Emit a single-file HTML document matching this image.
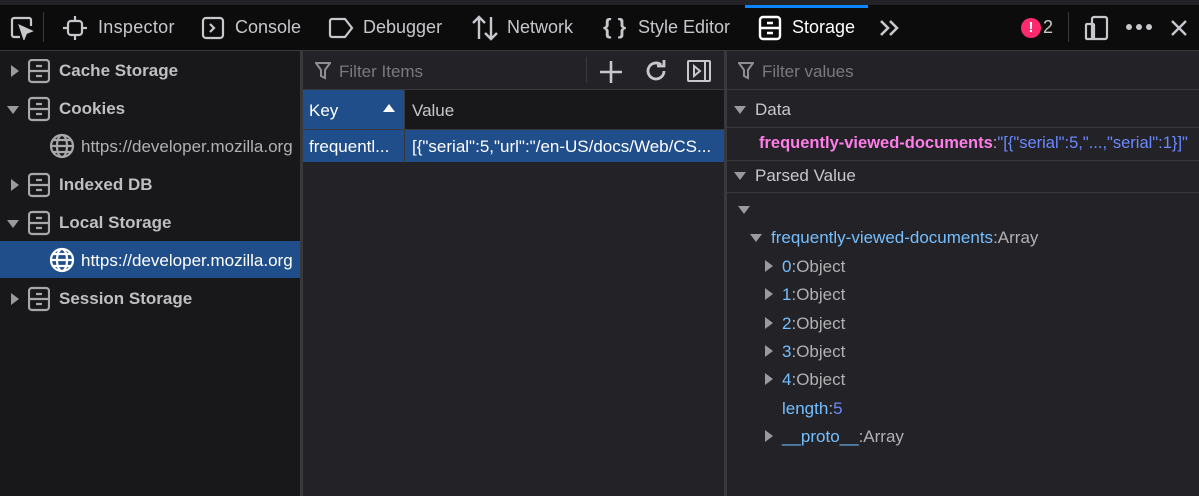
<!DOCTYPE html>
<html><head><style>
*{margin:0;padding:0;box-sizing:border-box}
body{width:1199px;height:496px;background:#232327;font-family:"Liberation Sans",sans-serif;color:#e0e0e2;position:relative;overflow:hidden;font-size:17px}
.a{position:absolute;white-space:nowrap}
svg{position:absolute}
.tb{color:#c8c8cc;font-size:18px}
.bold{font-weight:bold;color:#bfbfc3}
.tri{position:absolute;width:0;height:0}
.tr{border-top:6px solid transparent;border-bottom:6px solid transparent;border-left:8px solid #9a9a9e}
.td{border-left:6px solid transparent;border-right:6px solid transparent;border-top:8px solid #9a9a9e}
.blue{color:#75bfff}
.g{color:#b1b1b3}
</style></head><body>
<div class="a" style="left:0;top:0;width:1199px;height:5px;background:#232327"></div>
<div class="a" style="left:0;top:5px;width:1199px;height:45px;background:#0c0c0d"></div>
<div class="a" style="left:745px;top:5px;width:123px;height:3px;background:#0a84ff"></div>
<div class="a" style="left:0;top:50px;width:1199px;height:1px;background:#38383d"></div>
<svg style="left:10px;top:16px" width="24" height="24" viewBox="0 0 24 24" fill="none" stroke="#c8c8cc" stroke-width="2.2"><path d="M10 21H4a2 2 0 0 1-2-2V4a2 2 0 0 1 2-2h15a2 2 0 0 1 2 2v6"/><path d="M10 10l4 12 2-5 5-2z" fill="#c8c8cc"/></svg>
<div class="a" style="left:43px;top:12px;width:1px;height:30px;background:#3a3a3e"></div>
<svg style="left:63px;top:15px" width="24" height="26" viewBox="0 0 24 26" fill="none" stroke="#c8c8cc" stroke-width="2.2"><rect x="5" y="6" width="14" height="14" rx="3"/><path d="M12 1v5M12 20v5M0 13h5M19 13h5"/></svg>
<div class="a tb" style="left:98px;top:17px;letter-spacing:0.3px">Inspector</div>
<svg style="left:201px;top:16px" width="24" height="24" viewBox="0 0 24 24" fill="none" stroke="#c8c8cc" stroke-width="2.2"><rect x="2" y="2" width="20" height="20" rx="3"/><path d="M9 8l4 4-4 4"/></svg>
<div class="a tb" style="left:235px;top:17px">Console</div>
<svg style="left:328px;top:17px" width="26" height="22" viewBox="0 0 26 22" fill="none" stroke="#c8c8cc" stroke-width="2.2"><path d="M2 4a2 2 0 0 1 2-2h13l7 9-7 9H4a2 2 0 0 1-2-2z"/></svg>
<div class="a tb" style="left:363px;top:17px">Debugger</div>
<svg style="left:472px;top:15px" width="26" height="26" viewBox="0 0 26 26" fill="none" stroke="#c8c8cc" stroke-width="2.4"><path d="M7 24V2M1 8l6-6 6 6M19 2v22M13 18l6 6 6-6"/></svg>
<div class="a tb" style="left:507px;top:17px">Network</div>
<div class="a tb" style="left:603px;top:14px;font-size:22px;font-weight:bold">{ }</div>
<div class="a tb" style="left:638px;top:17px">Style Editor</div>
<svg style="left:758px;top:15px" width="24" height="26" viewBox="0 0 24 26" fill="none" stroke="#fff" stroke-width="2.4"><rect x="2" y="2" width="20" height="22" rx="3"/><path d="M2 13h20M9 8h6M9 18h6"/></svg>
<div class="a tb" style="left:792px;top:17px;color:#fff">Storage</div>
<svg style="left:879px;top:19px" width="22" height="18" viewBox="0 0 22 18" fill="none" stroke="#c8c8cc" stroke-width="2.6"><path d="M2 2l7 7-7 7M11 2l7 7-7 7"/></svg>
<div class="a" style="left:1021px;top:18px;width:20px;height:20px;border-radius:50%;background:#ff2a6d;color:#fff;font-weight:bold;font-size:15px;text-align:center;line-height:20px">!</div>
<div class="a tb" style="left:1043px;top:17px">2</div>
<div class="a" style="left:1068px;top:12px;width:1px;height:30px;background:#3a3a3e"></div>
<svg style="left:1084px;top:15px" width="26" height="26" viewBox="0 0 26 26" fill="none" stroke="#c8c8cc" stroke-width="2.2"><rect x="8" y="2" width="15" height="22" rx="2"/><rect x="2" y="9" width="8" height="15" rx="1"/></svg>
<svg style="left:1125px;top:22px" width="28" height="10" viewBox="0 0 28 10" fill="#c8c8cc"><circle cx="4" cy="5" r="3"/><circle cx="14" cy="5" r="3"/><circle cx="24" cy="5" r="3"/></svg>
<svg style="left:1170px;top:19px" width="18" height="18" viewBox="0 0 18 18" stroke="#c8c8cc" stroke-width="2.4"><path d="M2 2l14 14M16 2L2 16"/></svg>

<div class="a" style="left:0;top:51px;width:300px;height:445px;background:#18181a"></div>
<div class="a" style="left:300px;top:51px;width:3px;height:445px;background:#38383d"></div>
<div class="a" style="left:0;top:241px;width:300px;height:37px;background:#204e8a"></div>
<div class="tri tr" style="left:11px;top:65px"></div>
<div class="tri td" style="left:7px;top:106px"></div>
<div class="tri tr" style="left:11px;top:179px"></div>
<div class="tri td" style="left:7px;top:220px"></div>
<div class="tri tr" style="left:11px;top:293px"></div>
<svg style="left:28px;top:59px" width="22" height="260" viewBox="0 0 22 260" fill="none" stroke="#a8a8ac" stroke-width="2.2">
<g><rect x="1" y="1" width="20" height="22" rx="3"/><path d="M1 12h20M8 7h6M8 17h6"/></g>
<g transform="translate(0,38)"><rect x="1" y="1" width="20" height="22" rx="3"/><path d="M1 12h20M8 7h6M8 17h6"/></g>
<g transform="translate(0,114)"><rect x="1" y="1" width="20" height="22" rx="3"/><path d="M1 12h20M8 7h6M8 17h6"/></g>
<g transform="translate(0,152)"><rect x="1" y="1" width="20" height="22" rx="3"/><path d="M1 12h20M8 7h6M8 17h6"/></g>
<g transform="translate(0,228)"><rect x="1" y="1" width="20" height="22" rx="3"/><path d="M1 12h20M8 7h6M8 17h6"/></g>
</svg>
<div class="a bold" style="left:59px;top:61px">Cache Storage</div>
<div class="a bold" style="left:59px;top:99px">Cookies</div>
<div class="a bold" style="left:59px;top:175px">Indexed DB</div>
<div class="a bold" style="left:59px;top:213px">Local Storage</div>
<div class="a bold" style="left:59px;top:289px">Session Storage</div>
<svg style="left:49px;top:133px" width="26" height="26" viewBox="0 0 26 26" fill="none" stroke="#a8a8ac" stroke-width="2.2"><circle cx="13" cy="13" r="11"/><ellipse cx="13" cy="13" rx="5" ry="11"/><path d="M2 13h22M4 7h18M4 19h18"/></svg>
<svg style="left:49px;top:247px" width="26" height="26" viewBox="0 0 26 26" fill="none" stroke="#fff" stroke-width="2.2"><circle cx="13" cy="13" r="11"/><ellipse cx="13" cy="13" rx="5" ry="11"/><path d="M2 13h22M4 7h18M4 19h18"/></svg>
<div class="a" style="left:81px;top:137px;color:#b1b1b3">https://developer.mozilla.org</div>
<div class="a" style="left:81px;top:251px;color:#fff">https://developer.mozilla.org</div>

<div class="a" style="left:303px;top:51px;width:421px;height:445px;background:#232327"></div>
<div class="a" style="left:303px;top:89px;width:421px;height:1px;background:#38383d"></div>
<svg style="left:315px;top:62px" width="16" height="18" viewBox="0 0 16 18" fill="none" stroke="#8f8f93" stroke-width="2"><path d="M1 1h14L10 8v8l-4-2V8z"/></svg>
<div class="a" style="left:339px;top:62px;color:#7a7a7e">Filter Items</div>
<div class="a" style="left:586px;top:57px;width:1px;height:26px;background:#3a3a3e"></div>
<svg style="left:599px;top:60px" width="24" height="24" viewBox="0 0 24 24" stroke="#c8c8cc" stroke-width="2.6"><path d="M12 1v22M1 12h22"/></svg>
<svg style="left:644px;top:59px" width="24" height="24" viewBox="0 0 24 24" fill="none" stroke="#c8c8cc" stroke-width="2.8"><path d="M20 12a8 8 0 1 1-3-6.3"/><path d="M13 5h7V-1" transform="translate(0,2)"/></svg>
<svg style="left:687px;top:60px" width="24" height="22" viewBox="0 0 24 22" fill="none" stroke="#c8c8cc" stroke-width="2"><rect x="1" y="1" width="22" height="20" rx="1"/><path d="M18 1v20M7 6l6 5-6 5z"/></svg>
<div class="a" style="left:303px;top:90px;width:101px;height:39px;background:#204e8a"></div>
<div class="a" style="left:405px;top:90px;width:319px;height:39px;background:#18181a"></div>
<div class="a" style="left:404px;top:90px;width:1px;height:72px;background:#38383d"></div>
<div class="a" style="left:309px;top:101px;color:#fff">Key</div>
<div class="tri" style="left:383px;top:104px;border-left:6px solid transparent;border-right:6px solid transparent;border-bottom:8px solid #fff"></div>
<div class="a" style="left:412px;top:101px;color:#c8c8cc">Value</div>
<div class="a" style="left:303px;top:129px;width:421px;height:1px;background:#38383d"></div>
<div class="a" style="left:303px;top:130px;width:101px;height:32px;background:#204e8a"></div>
<div class="a" style="left:405px;top:130px;width:319px;height:32px;background:#204e8a"></div>
<div class="a" style="left:309px;top:137px;color:#fff">frequentl...</div>
<div class="a" style="left:412px;top:137px;color:#fff">[{"serial":5,"url":"/en-US/docs/Web/CS...</div>

<div class="a" style="left:724px;top:51px;width:3px;height:445px;background:#38383d"></div>
<div class="a" style="left:727px;top:89px;width:472px;height:1px;background:#38383d"></div>
<svg style="left:738px;top:62px" width="16" height="18" viewBox="0 0 16 18" fill="none" stroke="#8f8f93" stroke-width="2"><path d="M1 1h14L10 8v8l-4-2V8z"/></svg>
<div class="a" style="left:762px;top:62px;color:#7a7a7e">Filter values</div>
<div class="tri td" style="left:734px;top:106px"></div>
<div class="a" style="left:755px;top:100px;color:#c8c8cc">Data</div>
<div class="a" style="left:727px;top:127px;width:472px;height:1px;background:#38383d"></div>
<div class="a" style="left:759px;top:134px;font-size:16.5px"><b style="color:#ff7de9">frequently-viewed-documents</b><span class="g">:</span><span style="color:#6b89ff">"[{"serial":5,"...,"serial":1}]"</span></div>
<div class="a" style="left:727px;top:160px;width:472px;height:1px;background:#38383d"></div>
<div class="tri td" style="left:734px;top:172px"></div>
<div class="a" style="left:755px;top:166px;color:#c8c8cc">Parsed Value</div>
<div class="a" style="left:727px;top:192px;width:472px;height:1px;background:#38383d"></div>
<div class="tri td" style="left:738px;top:206px"></div>
<div class="tri td" style="left:750px;top:234px"></div>
<div class="a" style="left:771px;top:228px"><span class="blue">frequently-viewed-documents</span><span class="g">:Array</span></div>
<div class="tri tr" style="left:765px;top:260px"></div>
<div class="a" style="left:782px;top:257px"><span class="blue">0</span><span class="g">:Object</span></div>
<div class="tri tr" style="left:765px;top:288px"></div>
<div class="a" style="left:782px;top:285px"><span class="blue">1</span><span class="g">:Object</span></div>
<div class="tri tr" style="left:765px;top:317px"></div>
<div class="a" style="left:782px;top:314px"><span class="blue">2</span><span class="g">:Object</span></div>
<div class="tri tr" style="left:765px;top:345px"></div>
<div class="a" style="left:782px;top:342px"><span class="blue">3</span><span class="g">:Object</span></div>
<div class="tri tr" style="left:765px;top:373px"></div>
<div class="a" style="left:782px;top:370px"><span class="blue">4</span><span class="g">:Object</span></div>
<div class="a" style="left:782px;top:399px"><span class="blue">length</span><span class="g">:</span><span style="color:#6b89ff">5</span></div>
<div class="tri tr" style="left:765px;top:430px"></div>
<div class="a" style="left:782px;top:427px"><span class="blue">__proto__</span><span class="g">:Array</span></div>
</body></html>
